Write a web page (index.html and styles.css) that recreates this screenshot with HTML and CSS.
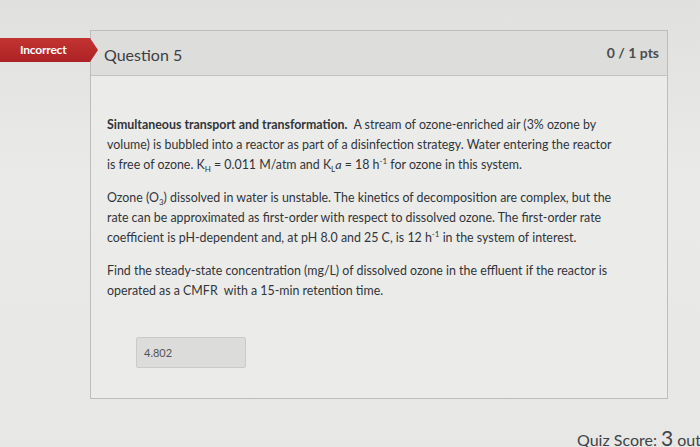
FILE: index.html
```html
<!DOCTYPE html>
<html>
<head>
<meta charset="utf-8">
<link rel="stylesheet" href="styles.css">
</head>
<body>
<div class="page">
  <div class="row">
    <div class="badge-col">
      <div class="badge">Incorrect</div>
    </div>
    <div class="card">
      <div class="card-head">
        <span class="qtitle">Question 5</span>
        <span class="pts">0 / 1 pts</span>
      </div>
      <div class="card-body">
        <p><b>Simultaneous transport and transformation.</b>&nbsp; A stream of ozone-enriched air (3% ozone by<br>volume) is bubbled into a reactor as part of a disinfection strategy. Water entering the reactor<br>is free of ozone. K<sub>H</sub> = 0.011 M/atm and K<sub>L</sub><i>a</i> = 18 h<sup>-1</sup> for ozone in this system.</p>
        <p>Ozone (O<sub>3</sub>) dissolved in water is unstable. The kinetics of decomposition are complex, but the<br>rate can be approximated as first-order with respect to dissolved ozone. The first-order rate<br>coefficient is pH-dependent and, at pH 8.0 and 25 C, is 12 h<sup>-1</sup> in the system of interest.</p>
        <p>Find the steady-state concentration (mg/L) of dissolved ozone in the effluent if the reactor is<br>operated as a CMFR&nbsp; with a 15-min retention time.</p>
        <div class="answer">4.802</div>
      </div>
    </div>
  </div>
  <div class="score">Quiz Score: <span class="big">3</span> out</div>
</div>
</body>
</html>
```
FILE: styles.css
```css
html, body {
  margin: 0;
  padding: 0;
}
body {
  width: 700px;
  height: 447px;
  overflow: hidden;
  background: linear-gradient(180deg, #e0e0de 0%, #eaeae8 40%, #e7e7e5 100%);
  font-family: Lato, "Open Sans", sans-serif;
  color: #3a3f44;
}
.page {
  padding-top: 30px;
  display: flex;
  flex-direction: column;
}
.row {
  display: flex;
  align-items: flex-start;
}
.badge-col {
  width: 90px;
  padding-top: 8px;
  flex: none;
}
.badge {
  width: 98px;
  height: 24px;
  background: linear-gradient(180deg, #c23430 0%, #ad2226 100%);
  color: #fff;
  font-weight: 700;
  font-size: 12px;
  line-height: 24px;
  padding-left: 20px;
  box-sizing: border-box;
  clip-path: polygon(0 0, 90px 0, 98px 50%, 90px 100%, 0 100%);
  letter-spacing: -0.2px;
}
.card {
  width: 578px;
  border: 1px solid #bdbdbb;
  background: #ebebe9;
  box-sizing: border-box;
  height: 369px;
}
.card-head {
  height: 44px;
  background: #dddddb;
  border-bottom: 1px solid #c3c3c1;
  display: flex;
  justify-content: space-between;
  align-items: center;
  padding: 0 8px 0 13px;
}
.qtitle {
  font-size: 16px;
  color: #3b3f44;
  padding-top: 3px;
}
.pts {
  font-size: 14px;
  font-weight: 700;
  color: #4a4d50;
  padding-bottom: 2px;
}
.card-body {
  padding: 39px 20px 0 16px;
}
.card-body p {
  margin: 0 0 13px;
  font-size: 12.4px;
  line-height: 20px;
  color: #30353a;
  white-space: nowrap;
}
sub, sup {
  font-size: 8px;
  line-height: 0;
}
.answer {
  margin: 36px 0 0 29px;
  width: 110px;
  height: 31px;
  box-sizing: border-box;
  background: #dcdcda;
  border: 1px solid #cacac8;
  border-radius: 2px;
  font-size: 11px;
  line-height: 29px;
  padding-left: 7px;
  color: #555;
}
.score {
  margin-top: 26px;
  padding-left: 577px;
  font-size: 16px;
  color: #3f4448;
  white-space: nowrap;
}
.score .big {
  font-size: 21px;
}
```
